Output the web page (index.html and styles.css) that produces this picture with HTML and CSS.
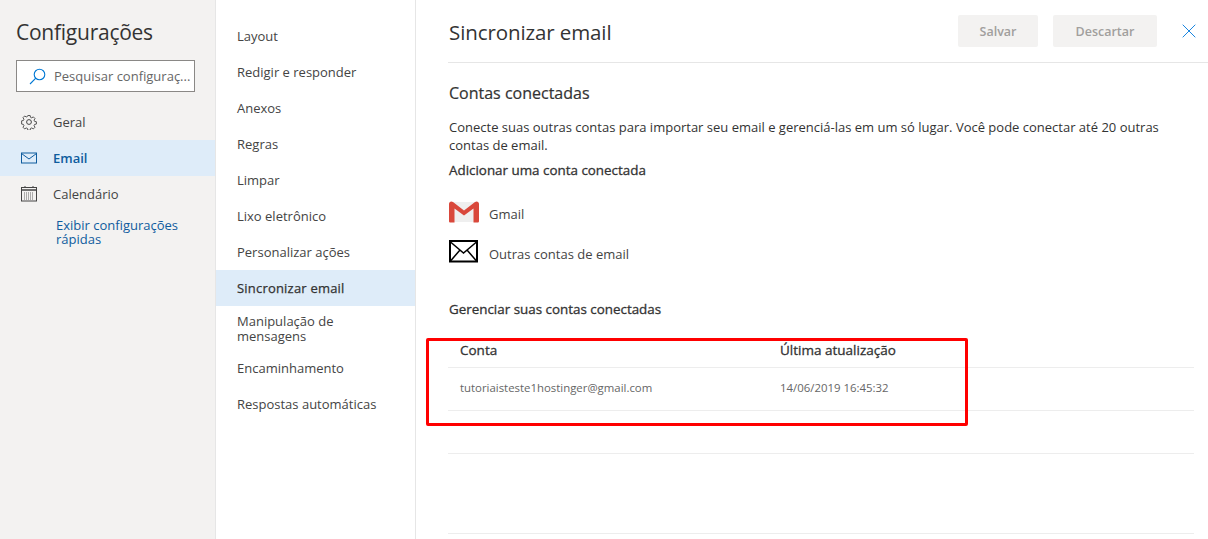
FILE: index.html
```html
<!DOCTYPE html>
<html lang="pt-BR">
<head>
<meta charset="utf-8">
<title>Configurações</title>
<link rel="stylesheet" href="styles.css">
</head>
<body>
<div class="app">
  <aside class="side">
    <h1 class="side-title">Configurações</h1>
    <div class="search">
      <svg class="search-icon" width="17" height="17" viewBox="0 0 17 17"><circle cx="10.500" cy="6.500" r="5.300" fill="none" stroke="#0078d4" stroke-width="1.100"/><path d="M6.800 10.200L1 16" fill="none" stroke="#0078d4" stroke-width="1.100"/></svg>
      <span class="search-text">Pesquisar configuraç...</span>
    </div>
    <nav class="side-nav">
      <div class="side-item">
        <svg class="side-icon" width="16" height="16" viewBox="0 0 16 16" fill="none" stroke="#444" stroke-width="1"><circle cx="8" cy="8" r="2.400"/><path d="M6.700.8h2.600l.4 2 1.400.6 1.700-1.100 1.900 1.900-1.100 1.700.6 1.400 2 .4v2.600l-2 .4-.6 1.400 1.100 1.700-1.900 1.900-1.700-1.100-1.400.6-.4 2H6.700l-.4-2-1.400-.6-1.700 1.100-1.900-1.900 1.100-1.700-.6-1.400-2-.4V6.700l2-.4.6-1.400-1.100-1.700 1.900-1.900 1.700 1.100 1.400-.6z" transform="translate(.8 .8) scale(.9)"/></svg>
        <span>Geral</span>
      </div>
      <div class="side-item side-item-active">
        <svg class="side-icon" width="16" height="16" viewBox="0 0 16 16" fill="none" stroke="#0f5c9e" stroke-width="1"><rect x=".5" y="3" width="15" height="10"/><path d="M.5 3.500L8 9l7.500-5.500"/></svg>
        <span>Email</span>
      </div>
      <div class="side-item">
        <svg class="side-icon" width="16" height="16" viewBox="0 0 16 16" fill="none" stroke="#444" stroke-width="1"><path d="M4 0v2M12 0v2"/><rect x=".5" y="1.500" width="15" height="13.500"/><path d="M.5 4h15" stroke-width="1.500"/><path d="M3 7h10M3 9h10M3 11h10M3 13h10" stroke-dasharray="1 1" stroke="#666"/></svg>
        <span>Calendário</span>
      </div>
    </nav>
    <a class="quick-link">Exibir configurações rápidas</a>
  </aside>

  <nav class="menu">
    <div class="menu-item">Layout</div>
    <div class="menu-item">Redigir e responder</div>
    <div class="menu-item">Anexos</div>
    <div class="menu-item">Regras</div>
    <div class="menu-item">Limpar</div>
    <div class="menu-item">Lixo eletrônico</div>
    <div class="menu-item">Personalizar ações</div>
    <div class="menu-item menu-item-active">Sincronizar email</div>
    <div class="menu-item menu-item-double">Manipulação de mensagens</div>
    <div class="menu-item">Encaminhamento</div>
    <div class="menu-item">Respostas automáticas</div>
  </nav>

  <main class="main">
    <header class="main-head">
      <h2 class="main-title">Sincronizar email</h2>
      <div class="actions">
        <button class="btn btn-save">Salvar</button>
        <button class="btn btn-discard">Descartar</button>
        <svg class="close" width="14" height="14" viewBox="0 0 14 14"><path d="M.7.7l12.600 12.600M13.300.7L.7 13.300" stroke="#1a86e0" stroke-width="1" fill="none"/></svg>
      </div>
    </header>
    <h3 class="section-title">Contas conectadas</h3>
    <p class="desc">Conecte suas outras contas para importar seu email e gerenciá-las em um só lugar. Você pode conectar até 20 outras contas de email.</p>
    <div class="sub-title">Adicionar uma conta conectada</div>
    <div class="provider provider-gmail">
      <svg width="30" height="22" viewBox="0 0 30 22"><path d="M2 1h26v20H2z" fill="#efefef"/><path d="M2 1L15 11 28 1v3L15 14 2 4z" fill="#fff"/><path d="M0 3c0-2 2-3.400 4-2l11 8.500L26 1c2-1.400 4-.0 4 2v17c0 1-.6 1.500-1.500 1.500H24.500V7.500L15 14.500 5.500 7.500v14H1.500C.6 21.500 0 21 0 20z" fill="#d9483b"/></svg>
      <span class="provider-label">Gmail</span>
    </div>
    <div class="provider provider-other">
      <svg width="30" height="23" viewBox="0 0 30 23" fill="none" stroke="#000"><rect x="1" y="1" width="27" height="20.500" stroke-width="2" fill="#fff"/><path d="M1.500 2L14.500 13 27.500 2M1.500 21L11 10M27.500 21L18 10" stroke-width="1.500"/></svg>
      <span class="provider-label">Outras contas de email</span>
    </div>
    <div class="manage-title">Gerenciar suas contas conectadas</div>
    <div class="table">
      <div class="row row-head"><span class="col-a">Conta</span><span>Última atualização</span></div>
      <div class="row row-body"><span class="col-a">tutoriaisteste1hostinger@gmail.com</span><span>14/06/2019 16:45:32</span></div>
      <div class="row row-empty"></div>
      <div class="row row-last"></div>
    </div>
  </main>
</div>
<div class="highlight"></div>
</body>
</html>
```
FILE: styles.css
```css
* { box-sizing: border-box; }
html, body { margin: 0; height: 100%; overflow: hidden; background: #fff; }
body { font-family: "Open Sans", "Noto Sans", sans-serif; color: #333; font-size: 13px; position: relative; }
.app { display: flex; height: 539px; }

.side { width: 216px; flex: none; background: #f3f2f1; border-right: 1px solid #e6e6e6; }
.side-title { margin: 0; padding: 17px 0 0 16px; font-size: 21px; line-height: 30px; font-weight: 400; color: #333; letter-spacing: -.25px; }
.search { margin: 13px 0 0 16px; width: 179px; height: 32px; background: #fff; border: 1px solid #8a8886; display: flex; align-items: center; padding-left: 12px; }
.search-icon { flex: none; margin-right: 8px; }
.search-text { font-size: 13px; color: #666; white-space: nowrap; }
.side-nav { margin-top: 12px; }
.side-item { height: 36px; display: flex; align-items: center; padding-left: 21px; color: #444; font-size: 13px; }
.side-icon { margin-right: 16px; flex: none; }
.side-item-active { background: #deecf9; color: #0f5c9e; font-weight: 600; }
.quick-link { display: block; margin: 6px 20px 0 56px; font-size: 13px; line-height: 14px; color: #0f5c9e; }

.menu { width: 200px; flex: none; border-right: 1px solid #e6e6e6; padding-top: 18px; }
.menu-item { height: 36px; display: flex; align-items: center; padding: 0 20px 0 21px; color: #444; font-size: 13px; line-height: 15px; }
.menu-item-active { background: #deecf9; color: #333; letter-spacing: .2px; -webkit-text-stroke: .25px #333; }
.menu-item-double { height: 44px; padding-top: 1px; }

.main { flex: 1; padding-left: 32px; padding-right: 14px; min-width: 0; }
.main-head { display: flex; justify-content: space-between; height: 63px; margin-right: -14px; padding-right: 14px; border-bottom: 1px solid #e6e6e6; padding-top: 15px; }
.main-title { margin: 0 0 0 1px; font-size: 20.500px; line-height: 34px; font-weight: 400; color: #333; letter-spacing: -.1px; }
.actions { display: flex; align-items: flex-start; margin-right: -1px; }
.btn { height: 32px; border: 0; border-radius: 2px; background: #f3f2f1; color: #a19f9d; font: 600 12.500px "Open Sans", sans-serif; padding: 0; }
.btn-save { width: 80px; margin-right: 15px; }
.btn-discard { width: 104px; margin-right: 25px; }
.close { margin: 9px -1px 0 0; }

.section-title { margin: 19px 0 0 1px; font-size: 16px; line-height: 22px; font-weight: 400; color: #333; -webkit-text-stroke: .2px #333; }
.desc { margin: 14px 0 0 1px; font-size: 13px; line-height: 18px; color: #333; width: 740px; }
.sub-title { margin: 7px 0 0 1px; font-size: 13.400px; line-height: 18px; color: #333; -webkit-text-stroke: .3px #333; }
.provider { display: flex; align-items: flex-end; }
.provider svg { flex: none; margin-left: 1px; }
.provider-label { margin-left: 10px; font-size: 13px; line-height: 17px; color: #444; }
.provider-gmail { margin-top: 20px; height: 24px; }
.provider-other { margin-top: 15px; height: 25px; }
.manage-title { margin: 37px 0 0 1px; font-size: 13.400px; line-height: 18px; color: #333; -webkit-text-stroke: .3px #333; }

.table { margin-top: 17px; }
.row { display: flex; align-items: center; padding-left: 12px; border-bottom: 1px solid #ededed; }
.col-a { width: 320px; flex: none; }
.row-head { height: 33px; font-size: 13.500px; color: #333; padding-bottom: 2px; -webkit-text-stroke: .3px #333; }
.row-body { height: 43px; font-size: 11.400px; color: #666; padding-bottom: 4px; }
.row-empty { height: 43px; }
.row-last { height: 80px; }

.highlight { position: absolute; left: 426px; top: 338px; width: 542px; height: 88px; border: 3px solid #f00; border-radius: 2px; }
```
